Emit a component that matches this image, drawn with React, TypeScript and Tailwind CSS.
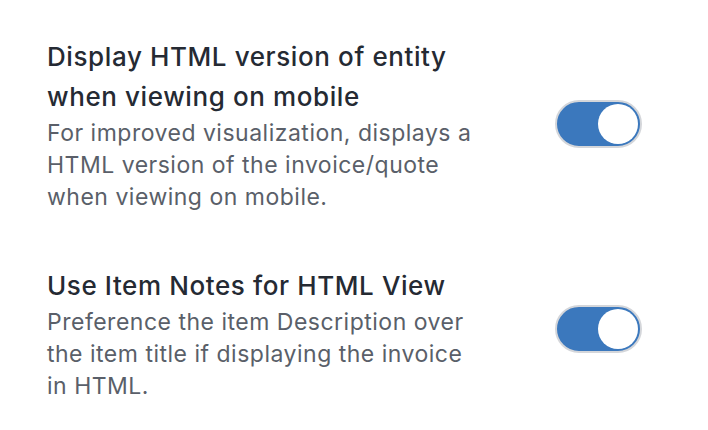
function Toggle({ className = "" }: { className?: string }) {
  return (
    <div
      className={`flex h-[48px] w-[87px] shrink-0 items-center justify-end rounded-full border-2 border-[#d4d6da] bg-[#3b78bd] p-[2px] ${className}`}
    >
      <div className="h-[40px] w-[40px] rounded-full bg-white" />
    </div>
  );
}

function SettingRow({
  title,
  description,
  toggleClass,
}: {
  title: string;
  description: string;
  toggleClass?: string;
}) {
  return (
    <div className="flex items-center justify-between">
      <div className="w-[432px]">
        <h3 className="text-[26px] leading-[40px] font-medium tracking-[0.6px] text-[#252a33]">{title}</h3>
        <p className="text-[23px] leading-[32px] tracking-[0.5px] text-[#5a5f69]">{description}</p>
      </div>
      <Toggle className={toggleClass} />
    </div>
  );
}

export default function App() {
  return (
    <div className="min-h-[430px] w-[708px] bg-white pt-[37px] pr-[66px] pl-[47px] font-['Inter','Noto_Sans',sans-serif]">
      <div className="flex flex-col gap-[53px]">
        <SettingRow
          title="Display HTML version of entity when viewing on mobile"
          description="For improved visualization, displays a HTML version of the invoice/quote when viewing on mobile."
          toggleClass="mb-[2px]"
        />
        <SettingRow
          title="Use Item Notes for HTML View"
          description="Preference the item Description over the item title if displaying the invoice in HTML."
          toggleClass="mb-[10px]"
        />
      </div>
    </div>
  );
}
